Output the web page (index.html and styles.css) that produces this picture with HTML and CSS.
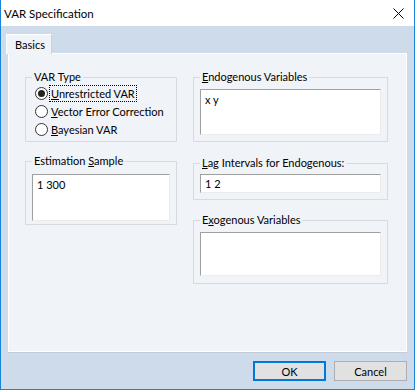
FILE: index.html
```html
<!DOCTYPE html>
<html lang="en">
<head>
    <meta charset="UTF-8">
    <title>VAR Specification</title>
    <link rel="stylesheet" href="styles.css">
</head>
<body>
    <div class="window">
        <div class="titlebar">
            <span class="title">VAR Specification</span>
            <svg class="close" width="11" height="11" viewBox="0 0 11 11">
                <path d="M0.5 0.5 L10.5 10.5 M10.5 0.5 L0.5 10.5" stroke="#000" stroke-width="1" fill="none"/>
            </svg>
        </div>
        <div class="client">
            <div class="tabs">
                <div class="tab">Basics</div>
            </div>
            <div class="tab-page">
                <div class="col col-left">
                    <fieldset class="group group-type">
                        <legend>VAR Type</legend>
                        <label class="radio-row">
                            <span class="radio checked"></span>
                            <span class="focus"><u>U</u>nrestricted VAR</span>
                        </label>
                        <label class="radio-row">
                            <span class="radio"></span>
                            <span><u>V</u>ector Error Correction</span>
                        </label>
                        <label class="radio-row">
                            <span class="radio"></span>
                            <span><u>B</u>ayesian VAR</span>
                        </label>
                    </fieldset>
                    <fieldset class="group group-sample">
                        <legend>Estimation <u>S</u>ample</legend>
                        <textarea class="box box-sample">1 300</textarea>
                    </fieldset>
                </div>
                <div class="col col-right">
                    <fieldset class="group group-endo">
                        <legend><u>E</u>ndogenous Variables</legend>
                        <textarea class="box box-endo">x y</textarea>
                    </fieldset>
                    <fieldset class="group group-lag">
                        <legend><u>L</u>ag Intervals for Endogenous:</legend>
                        <input class="box box-lag" type="text" value="1 2">
                    </fieldset>
                    <fieldset class="group group-exo">
                        <legend>E<u>x</u>ogenous Variables</legend>
                        <textarea class="box box-exo"></textarea>
                    </fieldset>
                </div>
            </div>
            <div class="buttons">
                <button class="btn btn-default">OK</button>
                <button class="btn">Cancel</button>
            </div>
        </div>
    </div>
</body>
</html>
```

FILE: styles.css
```css
* {
    box-sizing: border-box;
}

body {
    margin: 0;
    font-family: Lato, "Liberation Sans", sans-serif;
    font-size: 11px;
    color: #000;
    background-color: #fff;
}

.window {
    width: 415px;
    height: 390px;
    display: flex;
    flex-direction: column;
    border: 1px solid #1883d7;
    border-top: none;
}

.titlebar {
    height: 26px;
    display: flex;
    align-items: center;
    justify-content: space-between;
    padding-left: 3px;
    background-color: #fff;
}

.title {
    font-size: 11.5px;
}

.close {
    margin-right: 10px;
}

.client {
    flex: 1;
    display: flex;
    flex-direction: column;
    padding: 8px 7px 8px 7px;
    background-color: #cedbeb;
}

.tabs {
    display: flex;
    height: 19px;
}

.tab {
    width: 46px;
    height: 20px;
    margin-left: -2px;
    padding: 3px 0 0 8px;
    background-color: #f0f3f8;
    border: 1px solid #fff;
    border-right-color: #c9d2dc;
    border-bottom: none;
    position: relative;
    z-index: 1;
}

.tab-page {
    height: 299px;
    display: flex;
    gap: 16px;
    padding: 16px 17px 0 16px;
    background-color: #f0f3f8;
    border: 1px solid #fff;
    box-shadow: 0 1px 0 #c3ccd6;
}

.col {
    display: flex;
    flex-direction: column;
}

.col-left {
    width: 152px;
}

.col-right {
    width: 195px;
}

.group {
    margin: 0;
    padding: 0 6px 3px 6px;
    border: 1px solid #d7dbe0;
}

.group legend {
    padding: 0 2px;
    line-height: 14px;
    white-space: nowrap;
}

.group-type {
    padding-bottom: 3px;
}

.group-sample {
    margin-top: 12px;
    padding-top: 6px;
    padding-bottom: 3px;
}

.group-endo {
    padding-top: 5px;
    padding-bottom: 6px;
}

.group-lag {
    margin-top: 14px;
    padding-top: 4px;
    padding-bottom: 6px;
}

.group-exo {
    margin-top: 13px;
    padding-top: 5px;
    padding-bottom: 7px;
}

.radio-row {
    display: flex;
    align-items: center;
    height: 18px;
    padding-left: 3px;
    gap: 3px;
    white-space: nowrap;
}

.radio {
    flex: none;
    width: 13px;
    height: 13px;
    border: 1px solid #333;
    border-radius: 50%;
    background-color: #fff;
    display: flex;
    align-items: center;
    justify-content: center;
}

.radio.checked::after {
    content: "";
    width: 7px;
    height: 7px;
    border-radius: 50%;
    background-color: #222;
}

.focus {
    outline: 1px dotted #000;
    padding: 0 1px;
    margin-left: -1px;
    line-height: 15px;
}

.box {
    display: block;
    width: 100%;
    margin: 0;
    padding: 2px 4px;
    font: inherit;
    color: #000;
    background-color: #fff;
    border: 1px solid;
    border-color: #a0a0a0 #ececec #ececec #a0a0a0;
    resize: none;
    overflow: hidden;
    outline: none;
    line-height: 15px;
}

.box-sample {
    height: 47px;
}

.box-endo {
    height: 46px;
}

.box-lag {
    height: 19px;
    padding-top: 1px;
    padding-bottom: 1px;
}

.box-exo {
    height: 44px;
}

.buttons {
    display: flex;
    justify-content: flex-end;
    gap: 8px;
    margin-top: 9px;
}

.btn {
    width: 73px;
    height: 20px;
    padding: 0;
    font: inherit;
    color: #000;
    background-color: #e1e1e1;
    border: 1px solid #adadad;
}

.btn-default {
    border: 2px solid #0078d7;
}
```
